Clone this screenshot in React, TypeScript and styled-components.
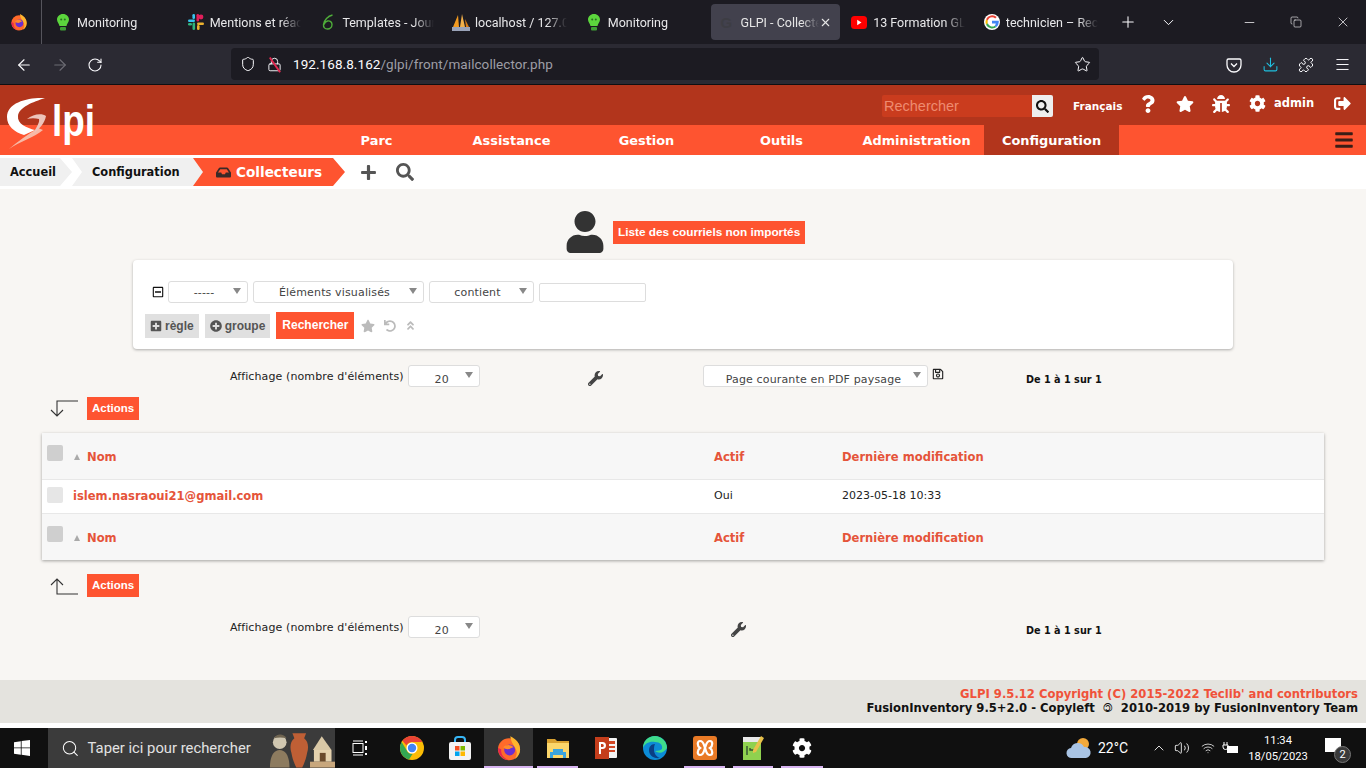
import styled, { createGlobalStyle } from "styled-components";
import {
  ArrowLeft,
  ArrowRight,
  ChevronDown,
  ChevronUp,
  Copy,
  Download,
  Lock,
  Menu,
  Minus,
  Plus,
  Puzzle,
  RotateCw,
  Search,
  Shield,
  Star,
  Volume2,
  Wifi,
  X,
} from "lucide-react";
import {
  FaAngleDoubleUp,
  FaBars,
  FaBug,
  FaCog,
  FaInbox,
  FaPlus,
  FaPlusCircle,
  FaPlusSquare,
  FaQuestion,
  FaRegMinusSquare,
  FaRegSave,
  FaSearch,
  FaSignOutAlt,
  FaStar,
  FaUndo,
  FaUser,
  FaWrench,
} from "react-icons/fa";

const ORANGE = "#fe5430";
const DARK_ORANGE = "#b2351c";

const GlobalStyle = createGlobalStyle`
  html, body {
    margin: 0;
    padding: 0;
    height: 768px;
    overflow: hidden;
    background: #fff;
  }
`;

/* little logos for browser tabs and the taskbar */
const FirefoxIcon = ({ size = 18 }: { size?: number }) => (
  <svg width={size} height={size} viewBox="0 0 20 20">
    <circle cx="10" cy="11" r="8.500" fill="#ff6a2a" />
    <path d="M11 1c4 2 7.500 5 7.500 10 0 4-2 6-4 7.500 2-3 2-6 0-9-1-2-3-4-3.500-8.500z" fill="#ffb52e" />
    <path d="M1.500 10c0 5 4 9.500 9 9.500-4-1-7-4-6.500-8.500l-2.500-1z" fill="#e8254f" />
    <circle cx="10.500" cy="11.500" r="4.200" fill="#6b2fd0" />
    <path d="M5.500 9.500c2-2.500 6-2.500 8 0-2 .3-2.500 1.500-4.500 1.500-1.500 0-2.500-.5-3.500-1.500z" fill="#ff8a2a" />
  </svg>
);

const BulbIcon = () => (
  <svg width="12" height="17" viewBox="0 0 12 17">
    <path d="M6 0c3.500 0 6 2.500 6 5.500 0 2.500-2 4-2.500 6.500h-7C2 9.500 0 8 0 5.500 0 2.500 2.500 0 6 0z" fill="#5cd63d" />
    <rect x="3" y="13" width="6" height="3.500" rx="1" fill="#3f9f35" />
    <circle cx="4.200" cy="5.500" r="1" fill="#2a6e22" />
    <circle cx="7.800" cy="5.500" r="1" fill="#2a6e22" />
  </svg>
);

const SlackIcon = () => (
  <svg width="16" height="16" viewBox="0 0 16 16">
    <rect x="0" y="5.500" width="7" height="2.600" rx="1.300" fill="#36c5f0" />
    <rect x="4.400" y="0" width="2.600" height="5" rx="1.300" fill="#36c5f0" />
    <rect x="8.500" y="0" width="2.600" height="7.500" rx="1.300" fill="#e01e5a" />
    <circle cx="13" cy="3" r="2.400" fill="#e01e5a" />
    <rect x="9" y="8.500" width="7" height="2.600" rx="1.300" fill="#ecb22e" />
    <rect x="9" y="11" width="2.600" height="5" rx="1.300" fill="#ecb22e" />
    <rect x="4.500" y="8.500" width="2.600" height="7.500" rx="1.300" fill="#2eb67d" />
    <rect x="0" y="9" width="4" height="2.600" rx="1.300" fill="#2eb67d" />
  </svg>
);

const LeafIcon = () => (
  <svg width="12" height="16" viewBox="0 0 12 16" fill="none" stroke="#4fae3a" strokeWidth="1.400">
    <path d="M10.500 1C6 2 2 6 1.500 10.500 1.200 13.500 3 15 5.500 15S10 13 10 10.500 8 6.500 5.500 7 2.500 9 2 10.500" />
  </svg>
);

const PmaIcon = () => (
  <svg width="18" height="17" viewBox="0 0 18 17">
    <path d="M1 13 6 1l1 12z" fill="#f29a1f" />
    <path d="M8 13 10 0l3 13z" fill="#f2b04a" />
    <path d="M14 13l-1-8 4 8z" fill="#d97a12" />
    <rect x="0" y="13" width="18" height="4" fill="#9aa3b8" />
  </svg>
);

const YoutubeIcon = () => (
  <svg width="16" height="13" viewBox="0 0 16 13">
    <rect width="16" height="13" rx="3.500" fill="#f00" />
    <path d="M6.200 3.800v5.400L10.500 6.500z" fill="#fff" />
  </svg>
);

const GoogleIcon = ({ size = 16 }: { size?: number }) => (
  <svg width={size} height={size} viewBox="0 0 16 16">
    <circle cx="8" cy="8" r="8" fill="#fff" />
    <path d="M8 3.200a4.800 4.800 0 0 1 3.200 1.200l1.500-1.500A7 7 0 0 0 2 5.300l1.800 1.400A4.600 4.600 0 0 1 8 3.200z" fill="#ea4335" />
    <path d="M2 5.300a7 7 0 0 0 0 5.400l1.800-1.400a4.500 4.500 0 0 1 0-2.600z" fill="#fbbc05" />
    <path d="M2 10.700A7 7 0 0 0 12.500 13l-1.700-1.300a4.600 4.600 0 0 1-7-2.400z" fill="#34a853" />
    <path d="M14.800 8c0-.5 0-.9-.1-1.300H8v2.700h3.800c-.2.900-.5 1.700-1 2.300l1.700 1.300A6.900 6.900 0 0 0 14.800 8z" fill="#4285f4" />
  </svg>
);

const PocketIcon = () => (
  <svg width="16" height="16" viewBox="0 0 16 16" fill="none" stroke="#fbfbfe" strokeWidth="1.300">
    <path d="M2.500 2h11A1.500 1.500 0 0 1 15 3.500V8A7 7 0 0 1 1 8V3.500A1.500 1.500 0 0 1 2.500 2z" />
    <path d="M5 6.500 8 9.500l3-3" />
  </svg>
);

const GlpiLogo = () => (
  <svg width="96" height="54" viewBox="0 0 96 54">
    <path d="M40 1C24 0 2 5 2 20c0 9 7 15 17 18l11-5C22 31 12 27 13 19 14 10 28 5 40 1z" fill="#fff" />
    <path d="M4 52c10-7 26-12 34-19l-5-2C22 38 12 45 4 52z" fill="#f7b9a6" />
    <path d="M22 22c6-5 15-6 19-3-1 7-7 13-12 17 2-6 6-10 5-14-4-1-8-1-12 0z" fill="#edc4ba" />
    <LogoLetters x="47" y="39" textLength="43" lengthAdjust="spacingAndGlyphs">
      lpi
    </LogoLetters>
  </svg>
);

const TaskWindows = () => (
  <svg width="16" height="16" viewBox="0 0 16 16" fill="#fff">
    <path d="M0 2.200 6.800 1.200v6.300H0zM7.600 1.100 16 0v7.500H7.600zM0 8.300h6.800v6.400L0 13.800zM7.600 8.300H16V16l-8.400-1.200z" />
  </svg>
);

const StatueArt = () => (
  <svg width="70" height="40" viewBox="0 0 70 40">
    <circle cx="13" cy="14" r="7" fill="#cfc6b0" />
    <path d="M3 40c0-12 4-18 10-18s10 6 10 18z" fill="#8d7b5f" />
    <path d="M7 10c3-5 10-5 13 0-4-1-9-1-13 0z" fill="#6f6450" />
    <path d="M26 5h14l-2 5c4 3 5 9 3 15-1 6-3 11-5 15h-6c-2-4-4-9-5-15-2-6-1-12 3-15z" fill="#bf5f35" />
    <path d="M47 22 56 8l10 14z" fill="#d9c8a6" />
    <rect x="48" y="22" width="18" height="12" fill="#e5d2ae" />
    <rect x="54" y="25" width="6" height="9" fill="#6a4a2c" />
    <rect x="44" y="34" width="26" height="6" fill="#c8a77d" />
  </svg>
);

const TaskView = () => (
  <svg width="16" height="16" viewBox="0 0 16 16" fill="none" stroke="#fff" strokeWidth="1">
    <rect x="1" y="3.500" width="10" height="9" />
    <path d="M1 1h10M1 15h10" />
    <path d="M14 1v2M14 6v4M14 13v2" strokeWidth="2" />
  </svg>
);

const ChromeIcon = () => (
  <svg width="24" height="24" viewBox="0 0 24 24">
    <circle cx="12" cy="12" r="12" fill="#fbbc05" />
    <path d="M12 0a12 12 0 0 1 10.400 6H12a6 6 0 0 0-5.500 3.500L2.400 4.800A12 12 0 0 1 12 0z" fill="#ea4335" />
    <path d="M1.600 6A12 12 0 0 0 9 23.600l3.500-5.700A6 6 0 0 1 6.500 14z" fill="#34a853" />
    <circle cx="12" cy="12" r="5.500" fill="#fff" />
    <circle cx="12" cy="12" r="4.200" fill="#4285f4" />
  </svg>
);

const StoreIcon = () => (
  <svg width="24" height="24" viewBox="0 0 24 24">
    <path d="M7 6V4a3 3 0 0 1 3-3h4a3 3 0 0 1 3 3v2" fill="none" stroke="#37b6f6" strokeWidth="2" />
    <rect x="1" y="6" width="22" height="18" rx="2" fill="#f3f3f3" />
    <rect x="7" y="10" width="4.500" height="4.500" fill="#f25022" />
    <rect x="12.500" y="10" width="4.500" height="4.500" fill="#7fba00" />
    <rect x="7" y="15.500" width="4.500" height="4.500" fill="#00a4ef" />
    <rect x="12.500" y="15.500" width="4.500" height="4.500" fill="#ffb900" />
  </svg>
);

const ExplorerIcon = () => (
  <svg width="22" height="20" viewBox="0 0 22 20">
    <path d="M0 1h8l2 2h12v4H0z" fill="#d9a130" />
    <rect x="0" y="5" width="22" height="15" fill="#fbd66b" />
    <path d="M6 11h10v3h3v6h-3v-3H6v3H3v-6h3z" fill="#3aa3de" />
  </svg>
);

const PptIcon = () => (
  <svg width="24" height="24" viewBox="0 0 24 24">
    <rect x="8" y="2" width="15" height="20" rx="1" fill="#f3f3f3" />
    <rect x="15" y="5" width="6" height="3" fill="#d24726" />
    <rect x="15" y="10" width="6" height="2" fill="#d24726" />
    <rect x="15" y="14" width="6" height="2" fill="#d24726" />
    <rect x="1" y="1" width="14" height="22" fill="#c43e1c" />
    <path d="M5 6h3.500a3 3 0 0 1 0 7H7v5H5zM7 8v3h1.300a1.500 1.500 0 0 0 0-3z" fill="#fff" />
  </svg>
);

const EdgeIcon = () => (
  <svg width="24" height="24" viewBox="0 0 24 24">
    <circle cx="12" cy="12" r="12" fill="#0c8bd6" />
    <path d="M24 12C24 5 18 0 12 0 5 0 0 5 0 12c2-5 7-7 12-6 5 0 8 3 7 7-1 1-4 2-7 2 4 3 9 2 12-3z" fill="#3fdc8c" />
    <path d="M12 8c-4 0-6 3-6 6 0 5 4 9 11 8-3-1-6-4-6-8 0-2 0-4 1-6z" fill="#0a3f85" />
  </svg>
);

const XamppIcon = () => (
  <svg width="24" height="24" viewBox="0 0 24 24">
    <rect width="24" height="24" rx="3" fill="#e97a26" />
    <path d="M7 5c4 0 4 5 5 7 1-2 1-7 5-7 3 0 3 5 0 7 3 2 3 7 0 7-4 0-4-5-5-7-1 2-1 7-5 7-3 0-3-5 0-7-3-2-3-7 0-7z" fill="none" stroke="#fff" strokeWidth="2.200" />
  </svg>
);

const NotepadIcon = () => (
  <svg width="24" height="24" viewBox="0 0 24 24">
    <rect x="2" y="1" width="18" height="23" fill="#8fd14f" />
    <rect x="2" y="1" width="18" height="5" fill="#e8e8e8" />
    <path d="M6 10v9M9 12v2h4" stroke="#2f4f2f" strokeWidth="1.400" fill="none" />
    <path d="M20 0l3 2-8 14-3 1 0-3z" fill="#e8c14a" />
  </svg>
);

const WeatherIcon = () => (
  <svg width="26" height="24" viewBox="0 0 26 24">
    <circle cx="17" cy="8" r="6" fill="#f2a93b" />
    <path d="M6 22a5 5 0 0 1-1-10 7 7 0 0 1 13-1 5.500 5.500 0 0 1 2 11z" fill="#a9c4e4" />
  </svg>
);

const BatteryIcon = () => (
  <svg width="16" height="14" viewBox="0 0 16 14" fill="none" stroke="#fff">
    <path d="M2 1v3M5 1v3M1 4h5v2a2.500 2.500 0 0 1-5 0z" />
    <rect x="5.500" y="5.500" width="10" height="6" fill="#fff" />
  </svg>
);

function GoogleDim() {
  return <DimText>G</DimText>;
}

const TABS = [
  { icon: <BulbIcon />, title: "Monitoring" },
  { icon: <SlackIcon />, title: "Mentions et réactions" },
  { icon: <LeafIcon />, title: "Templates - Journal" },
  { icon: <PmaIcon />, title: "localhost / 127.0.0.1" },
  { icon: <BulbIcon />, title: "Monitoring" },
  { icon: <GoogleDim />, title: "GLPI - Collecteurs", active: true },
  { icon: <YoutubeIcon />, title: "13 Formation GLPI" },
  { icon: <GoogleIcon />, title: "technicien – Recherche" },
];

const TASK_ICONS = [
  { icon: <ChromeIcon />, width: 48 },
  { icon: <StoreIcon />, width: 48 },
  { icon: <FirefoxIcon size={26} />, width: 49, active: true, open: true },
  { icon: <ExplorerIcon />, width: 49, open: true },
  { icon: <PptIcon />, width: 48 },
  { icon: <EdgeIcon />, width: 50 },
  { icon: <XamppIcon />, width: 49, open: true },
  { icon: <NotepadIcon />, width: 48, open: true },
  { icon: <FaCog color="#fff" size={20} />, width: 50, open: true },
];

const MENU = ["Parc", "Assistance", "Gestion", "Outils", "Administration", "Configuration"];

const PageSize = () => (
  <PagerLabel>
    Affichage (nombre d'éléments)
    <SelectBox $width={72}>
      <SelectText $low>20</SelectText>
    </SelectBox>
  </PagerLabel>
);

const TableHead = () => (
  <HeadRow>
    <CheckCell>
      <CheckBox $dark />
    </CheckCell>
    <HeadCell>
      <SortArrow />
      Nom
    </HeadCell>
    <HeadCell>Actif</HeadCell>
    <HeadCell>Dernière modification</HeadCell>
  </HeadRow>
);

const App = () => {
  return (
    <Screen>
      <GlobalStyle />
      <TabBar>
        <FirefoxSlot>
          <FirefoxIcon />
        </FirefoxSlot>
        {TABS.map((tab, i) => (
          <Tab key={i} $active={tab.active}>
            <TabIcon>{tab.icon}</TabIcon>
            <TabTitle $active={tab.active}>{tab.title}</TabTitle>
            {tab.active && <X size={13} color="#e6e6e6" />}
          </Tab>
        ))}
        <TabTool $width={39}>
          <Plus size={18} strokeWidth={1.4} />
        </TabTool>
        <TabTool $width={39}>
          <ChevronDown size={17} strokeWidth={1.4} />
        </TabTool>
        <WindowButtons>
          <Minus size={15} strokeWidth={1.2} />
          <Copy size={12} strokeWidth={1.2} />
          <X size={16} strokeWidth={1.1} />
        </WindowButtons>
      </TabBar>

      <NavBar>
        <NavButtons>
          <ArrowLeft size={18} strokeWidth={1.5} />
          <ArrowRight size={18} strokeWidth={1.5} color="#6d6c74" />
          <RotateCw size={16} strokeWidth={1.6} />
        </NavButtons>
        <UrlBar>
          <Shield size={16} strokeWidth={1.5} />
          <LockWrap>
            <Lock size={15} strokeWidth={1.5} />
            <LockSlash />
          </LockWrap>
          <Url>
            192.168.8.162<UrlRest>/glpi/front/mailcollector.php</UrlRest>
          </Url>
          <Star size={17} strokeWidth={1.4} />
        </UrlBar>
        <NavTools>
          <PocketIcon />
          <Download size={17} strokeWidth={1.5} color="#1fc0e0" />
          <Puzzle size={16} strokeWidth={1.5} />
          <Menu size={17} strokeWidth={1.4} />
        </NavTools>
      </NavBar>

      <Page>
        <Header>
          <LogoSlot>
            <GlpiLogo />
          </LogoSlot>
          <TopBar>
            <GlobalSearch>
              <GlobalInput>Rechercher</GlobalInput>
              <GlobalButton>
                <FaSearch size={13} color="#111" />
              </GlobalButton>
            </GlobalSearch>
            <Lang>Français</Lang>
            <TopIcon $width={20}>
              <FaQuestion size={18} />
            </TopIcon>
            <TopIcon $width={19}>
              <FaStar size={18} />
            </TopIcon>
            <TopIcon $width={20}>
              <FaBug size={18} />
            </TopIcon>
            <TopIcon $width={19}>
              <FaCog size={17} />
            </TopIcon>
            <UserName>admin</UserName>
            <TopIcon $width={18}>
              <FaSignOutAlt size={17} />
            </TopIcon>
          </TopBar>
          <MainMenu>
            {MENU.map((item) => (
              <MenuItem key={item} $active={item === "Configuration"}>
                {item}
              </MenuItem>
            ))}
            <MenuBurger>
              <FaBars size={20} color="#3a1d16" />
            </MenuBurger>
          </MainMenu>
        </Header>

        <CrumbBar>
          <Crumb $first>Accueil</Crumb>
          <Crumb>Configuration</Crumb>
          <CurrentCrumb>
            <FaInbox size={15} color="#3a2a28" />
            Collecteurs
          </CurrentCrumb>
          <CrumbTools>
            <FaPlus size={17} />
            <FaSearch size={18} />
          </CrumbTools>
        </CrumbBar>

        <Content>
          <TitleRow>
            <FaUser size={42} color="#333" />
            <OrangeButton $width={192}>Liste des courriels non importés</OrangeButton>
          </TitleRow>

          <SearchCard>
            <SearchLine>
              <MinusSlot>
                <FaRegMinusSquare size={12} color="#111" />
              </MinusSlot>
              <SelectBox $width={80}>
                <SelectText>-----</SelectText>
              </SelectBox>
              <SelectBox $width={171}>
                <SelectText>Éléments visualisés</SelectText>
              </SelectBox>
              <SelectBox $width={105}>
                <SelectText>contient</SelectText>
              </SelectBox>
              <TextField />
            </SearchLine>
            <SearchActions>
              <GrayButton>
                <FaPlusSquare size={12} color="#555" />
                règle
              </GrayButton>
              <GrayButton>
                <FaPlusCircle size={12} color="#555" />
                groupe
              </GrayButton>
              <SubmitButton>Rechercher</SubmitButton>
              <MutedIcons>
                <FaStar size={14} />
                <FaUndo size={12} />
                <FaAngleDoubleUp size={11} />
              </MutedIcons>
            </SearchActions>
          </SearchCard>

          <Pager $columns="358px 115px 323px 1fr" $top={16}>
            <PageSize />
            <WrenchSlot>
              <FaWrench size={15} />
            </WrenchSlot>
            <ExportCell>
              <SelectBox $width={225}>
                <SelectText $low>Page courante en PDF paysage</SelectText>
              </SelectBox>
              <SaveSlot>
                <FaRegSave size={12} color="#222" />
              </SaveSlot>
            </ExportCell>
            <Count>De 1 à 1 sur 1</Count>
          </Pager>

          <ActionsRow $top={10}>
            <CornerArrow viewBox="0 0 28 18" width="28" height="18">
              <path d="M28 1H7v15M1 10l6 6 6-6" fill="none" stroke="#333" strokeWidth="1.100" />
            </CornerArrow>
            <OrangeButton>Actions</OrangeButton>
          </ActionsRow>

          <ListTable>
            <colgroup>
              <col width="31" />
              <col width="641" />
              <col width="128" />
              <col />
            </colgroup>
            <tbody>
              <TableHead />
              <DataRow>
                <CheckCell $data>
                  <CheckBox />
                </CheckCell>
                <NameCell>islem.nasraoui21@gmail.com</NameCell>
                <DataCell>Oui</DataCell>
                <DataCell>2023-05-18 10:33</DataCell>
              </DataRow>
              <TableHead />
            </tbody>
          </ListTable>

          <ActionsRow $top={14}>
            <CornerArrow viewBox="0 0 28 18" width="28" height="18">
              <path d="M28 17H7V2M1 8l6-6 6 6" fill="none" stroke="#333" strokeWidth="1.100" />
            </CornerArrow>
            <OrangeButton>Actions</OrangeButton>
          </ActionsRow>

          <Pager $columns="501px 295px 1fr" $top={19}>
            <PageSize />
            <WrenchSlot>
              <FaWrench size={15} />
            </WrenchSlot>
            <Count>De 1 à 1 sur 1</Count>
          </Pager>
        </Content>

        <Footer>
          <FooterLine $red>GLPI 9.5.12 Copyright (C) 2015-2022 Teclib' and contributors</FooterLine>
          <FooterLine>
            FusionInventory 9.5+2.0 - Copyleft <CopyleftMark>🄯</CopyleftMark> 2010-2019 by FusionInventory Team
          </FooterLine>
        </Footer>
      </Page>

      <Taskbar>
        <StartButton>
          <TaskWindows />
        </StartButton>
        <TaskSearch>
          <Search size={19} strokeWidth={1.3} color="#fff" />
          <TaskSearchText>Taper ici pour rechercher</TaskSearchText>
          <StatueArt />
        </TaskSearch>
        <TaskViewSlot>
          <TaskView />
        </TaskViewSlot>
        {TASK_ICONS.map((item, i) => (
          <TaskItem key={i} $width={item.width} $active={item.active} $open={item.open}>
            {item.icon}
          </TaskItem>
        ))}
        <Tray>
          <WeatherIcon />
          <Temp>22°C</Temp>
          <TrayIcons>
            <ChevronUp size={16} strokeWidth={1.3} />
            <Volume2 size={16} strokeWidth={1.3} />
            <WifiIcon size={14} strokeWidth={1.3} />
            <BatteryIcon />
          </TrayIcons>
          <Clock>
            <span>11:34</span>
            <span>18/05/2023</span>
          </Clock>
          <Notif>
            <NotifSheet />
            <NotifBadge>2</NotifBadge>
          </Notif>
        </Tray>
      </Taskbar>
    </Screen>
  );
};

export default App;

const Screen = styled.div`
  width: 1366px;
  height: 768px;
  display: flex;
  flex-direction: column;
  overflow: hidden;
  font-family: "DejaVu Sans", sans-serif;
`;

const TabBar = styled.div`
  height: 44px;
  flex: none;
  display: flex;
  align-items: center;
  background: #1c1b22;
  color: #fbfbfe;
`;

const FirefoxSlot = styled.div`
  width: 42px;
  height: 44px;
  box-sizing: border-box;
  display: flex;
  align-items: center;
  justify-content: center;
  border-right: 1px solid #55545c;
  margin-right: 4px;
  padding-right: 3px;
`;

const DimText = styled.span`
  color: #3d3d44;
  font: bold 15px "Liberation Sans", sans-serif;
`;

const Tab = styled.div<{ $active?: boolean }>`
  width: 128.700px;
  height: 36px;
  flex: none;
  margin: 0 2px;
  box-sizing: border-box;
  padding: 0 8px 0 5px;
  display: flex;
  align-items: center;
  border-radius: 4px;
  background: ${({ $active }) => ($active ? "#42414d" : "transparent")};
`;

const TabIcon = styled.div`
  width: 20px;
  flex: none;
  display: flex;
  justify-content: center;
  margin-right: 4px;
`;

const TabTitle = styled.div<{ $active?: boolean }>`
  flex: 1;
  min-width: 0;
  overflow: hidden;
  white-space: nowrap;
  font: 12.500px Roboto, sans-serif;
  color: ${({ $active }) => ($active ? "#e6e6e6" : "#e8e8ea")};
  -webkit-mask-image: linear-gradient(to right, #000 78%, transparent 100%);
  mask-image: linear-gradient(to right, #000 78%, transparent 100%);
`;

const TabTool = styled.div<{ $width: number }>`
  width: ${({ $width }) => $width}px;
  flex: none;
  display: flex;
  justify-content: center;
  padding-left: 1px;
`;

const WindowButtons = styled.div`
  margin-left: auto;
  width: 144px;
  display: flex;
  align-items: center;
  justify-content: space-between;
  padding: 0 15px 0 20px;
  box-sizing: border-box;
`;

const NavBar = styled.div`
  height: 41px;
  flex: none;
  display: flex;
  align-items: center;
  background: #2b2a33;
  color: #fbfbfe;
  border-bottom: 1px solid #0f0f12;
  box-sizing: border-box;
`;

const NavButtons = styled.div`
  width: 231px;
  flex: none;
  display: flex;
  align-items: center;
  gap: 18px;
  padding: 1px 0 0 15px;
  box-sizing: border-box;
`;

const UrlBar = styled.div`
  width: 868px;
  height: 32px;
  flex: none;
  display: flex;
  align-items: center;
  padding: 0 8px 0 9px;
  box-sizing: border-box;
  background: #1c1b22;
  border-radius: 4px;
`;

const LockWrap = styled.span`
  position: relative;
  display: flex;
  margin-left: 11px;
`;

const LockSlash = styled.span`
  position: absolute;
  left: 7px;
  top: -1px;
  width: 1.500px;
  height: 18px;
  background: #e22850;
  transform: rotate(-35deg);
`;

const Url = styled.div`
  flex: 1;
  margin-left: 11px;
  font: 13.500px Roboto, sans-serif;
  color: #fbfbfe;
  letter-spacing: 0.070px;
`;

const UrlRest = styled.span`
  color: #9e9ea6;
`;

const NavTools = styled.div`
  flex: 1;
  display: flex;
  align-items: center;
  justify-content: space-between;
  padding: 1px 15px 0 127px;
`;

const Page = styled.div`
  flex: 1;
  min-height: 0;
  display: flex;
  flex-direction: column;
  background: #fff;
`;

const Header = styled.header`
  position: relative;
  flex: none;
`;

const LogoSlot = styled.div`
  position: absolute;
  left: 5px;
  top: 12px;
  z-index: 2;
`;

const LogoLetters = styled.text`
  font: bold 44px "Liberation Sans", sans-serif;
  fill: #fff;
`;

const TopBar = styled.div`
  height: 40px;
  display: flex;
  align-items: center;
  padding-left: 882px;
  background: ${DARK_ORANGE};
  color: #fff;
`;

const GlobalSearch = styled.div`
  display: flex;
  width: 171px;
  height: 22px;
  margin-top: 2px;
  border-radius: 2px;
  overflow: hidden;
`;

const GlobalInput = styled.div`
  flex: 1;
  background: #ca3c1e;
  color: #ee8b70;
  font: 14.500px/22px "Liberation Sans", sans-serif;
  padding-left: 2px;
`;

const GlobalButton = styled.div`
  width: 21px;
  display: flex;
  align-items: center;
  justify-content: center;
  background: #eee;
`;

const Lang = styled.div`
  margin: 2px 0 0 20px;
  width: 48px;
  font-size: 10.500px;
  font-weight: bold;
  white-space: nowrap;
`;

const TopIcon = styled.div<{ $width: number }>`
  width: ${({ $width }) => $width}px;
  display: flex;
  justify-content: center;
  margin-left: 17px;
  margin-top: -3px;
`;

const UserName = styled.div`
  margin: -4px 2px 0 7px;
  width: 40px;
  font-size: 11.500px;
  font-weight: bold;
`;

const MainMenu = styled.nav`
  height: 30px;
  display: flex;
  padding-left: 309px;
  background: ${ORANGE};
`;

const MenuItem = styled.div<{ $active?: boolean }>`
  width: 135px;
  text-align: center;
  font-size: 12.900px;
  font-weight: bold;
  line-height: 31px;
  color: #fff;
  white-space: nowrap;
  background: ${({ $active }) => ($active ? DARK_ORANGE : "transparent")};
`;

const MenuBurger = styled.div`
  margin-left: auto;
  padding: 5px 12px 0 0;
`;

const CrumbBar = styled.div`
  height: 34px;
  flex: none;
  display: flex;
  align-items: center;
  background: #fff;
`;

const Crumb = styled.div<{ $first?: boolean }>`
  height: 28px;
  display: flex;
  align-items: center;
  box-sizing: border-box;
  background: #f0f0f0;
  color: #111;
  font-size: 11.400px;
  font-weight: bold;
  width: ${({ $first }) => ($first ? "72px" : "134px")};
  padding-left: ${({ $first }) => ($first ? "10px" : "20px")};
  margin-right: ${({ $first }) => ($first ? "0" : "-13px")};
  clip-path: polygon(
    0 0,
    calc(100% - 12px) 0,
    100% 50%,
    calc(100% - 12px) 100%,
    0 100%,
    ${({ $first }) => ($first ? "0" : "10px")} 50%
  );
`;

const CurrentCrumb = styled.div`
  height: 28px;
  width: 152px;
  box-sizing: border-box;
  padding-left: 23px;
  display: flex;
  align-items: center;
  gap: 5px;
  background: ${ORANGE};
  color: #fff;
  font-size: 13.600px;
  font-weight: bold;
  white-space: nowrap;
  clip-path: polygon(0 100%, 10px 50%, 0 0, calc(100% - 12px) 0, 100% 50%, calc(100% - 12px) 100%);
`;

const CrumbTools = styled.div`
  display: flex;
  align-items: center;
  gap: 19px;
  margin-left: 15px;
  color: #555;
`;

const Content = styled.main`
  flex: 1;
  min-height: 0;
  background: #f8f6f3;
`;

const TitleRow = styled.div`
  height: 71px;
  box-sizing: border-box;
  padding: 15px 0 0 564px;
  display: flex;
  align-items: center;
  gap: 7px;
`;

const OrangeButton = styled.div<{ $width?: number }>`
  height: 23px;
  width: ${({ $width }) => ($width ? `${$width}px` : "auto")};
  box-sizing: ${({ $width }) => ($width ? "border-box" : "content-box")};
  padding: 0 5px;
  background: ${ORANGE};
  color: #fff;
  font: bold ${({ $width }) => ($width ? "11.800px" : "11.500px")}/22px "Liberation Sans", sans-serif;
  white-space: nowrap;
`;

const SearchCard = styled.section`
  width: 1100px;
  height: 89px;
  margin-left: 133px;
  box-sizing: border-box;
  padding: 21px 0 0 13px;
  background: #fff;
  border-radius: 4px;
  box-shadow: 0 1px 3px rgba(0, 0, 0, 0.3);
`;

const SearchLine = styled.div`
  display: flex;
  align-items: center;
  gap: 5px;
`;

const MinusSlot = styled.div`
  width: 16px;
  margin-left: 6px;
  margin-right: -5px;
  display: flex;
`;

const SelectBox = styled.div<{ $width: number }>`
  position: relative;
  width: ${({ $width }) => $width}px;
  height: 22px;
  flex: none;
  box-sizing: border-box;
  display: flex;
  align-items: center;
  padding-right: 8px;
  background: #fff;
  border: 1px solid #ddd;
  border-radius: 3px;

  &::after {
    content: "";
    position: absolute;
    right: 6px;
    top: 6px;
    border-style: solid;
    border-width: 6px 4px 0;
    border-color: #888 transparent transparent;
  }
`;

/* the pager selects sit their text a little lower than the search selects */
const SelectText = styled.span<{ $low?: boolean }>`
  flex: 1;
  text-align: center;
  color: #444;
  font-size: 11px;
  font-weight: normal;
  letter-spacing: 0.150px;
  white-space: nowrap;
  padding: ${({ $low }) => ($low ? "6px 0 0 4px" : "1px 0 0")};
`;

const TextField = styled.div`
  width: 107px;
  height: 19px;
  box-sizing: border-box;
  background: #fff;
  border: 1px solid #ddd;
  border-radius: 2px;
`;

const SearchActions = styled.div`
  display: flex;
  align-items: center;
  gap: 6px;
  margin: 9px 0 0 -1px;
`;

const GrayButton = styled.div`
  height: 24px;
  padding: 0 5px;
  display: flex;
  align-items: center;
  gap: 3px;
  background: #e0e0e0;
  color: #555;
  font: bold 12px "Liberation Sans", sans-serif;
`;

const SubmitButton = styled.div`
  height: 27px;
  padding: 0 6px;
  background: ${ORANGE};
  color: #fff;
  font: bold 12px/27px "Liberation Sans", sans-serif;
`;

const MutedIcons = styled.div`
  display: flex;
  align-items: center;
  gap: 9px;
  margin-left: 1px;
  color: #bbb;
`;

const Pager = styled.div<{ $columns: string; $top: number }>`
  display: grid;
  grid-template-columns: ${({ $columns }) => $columns};
  align-items: center;
  height: 22px;
  margin-top: ${({ $top }) => $top}px;
  padding-left: 230px;
  color: #222;
  font-size: 11px;
`;

const PagerLabel = styled.div`
  display: flex;
  align-items: center;
  gap: 4px;
  white-space: nowrap;
  letter-spacing: 0.110px;
`;

const WrenchSlot = styled.div`
  display: flex;
  padding-top: 5px;
  color: #444;
`;

const ExportCell = styled.div`
  display: flex;
  align-items: flex-start;
  gap: 4px;
`;

const SaveSlot = styled.div`
  display: flex;
  padding-top: 3px;
`;

const Count = styled.div`
  padding-top: 6px;
  font-size: 9.700px;
  font-weight: bold;
  color: #111;
  white-space: nowrap;
`;

const ActionsRow = styled.div<{ $top: number }>`
  display: flex;
  align-items: center;
  gap: 9px;
  margin-top: ${({ $top }) => $top}px;
  padding-left: 50px;
`;

const CornerArrow = styled.svg`
  flex: none;
`;

const ListTable = styled.table`
  width: 1282px;
  height: 127px;
  margin: 13px 0 0 42px;
  table-layout: fixed;
  border-collapse: collapse;
  background: #fff;
  box-shadow: 0 1px 3px rgba(0, 0, 0, 0.35);
`;

const HeadRow = styled.tr`
  height: 46px;
  background: #f7f7f7;
`;

const DataRow = styled.tr`
  height: 33px;
  background: #fff;
  border-top: 1px solid #e8e8e8;
  border-bottom: 1px solid #e8e8e8;
`;

const CheckCell = styled.td<{ $data?: boolean }>`
  padding: ${({ $data }) => ($data ? "0 0 2px 5px" : "0 0 6px 5px")};
`;

const CheckBox = styled.div<{ $dark?: boolean }>`
  width: 16px;
  height: 16px;
  border-radius: 2px;
  background: ${({ $dark }) => ($dark ? "#cfcfcf" : "#e6e6e6")};
`;

const HeadCell = styled.td`
  padding: 2px 0 0;
  color: #e5543a;
  font-size: 11.550px;
  font-weight: bold;
  white-space: nowrap;
`;

const SortArrow = styled.span`
  display: inline-block;
  margin: 0 7px 1px 1px;
  border-style: solid;
  border-width: 0 3.500px 6px;
  border-color: transparent transparent #aaa;
`;

const NameCell = styled.td`
  padding: 0 0 1px;
  color: #e5543a;
  font-size: 11.550px;
  font-weight: bold;
  white-space: nowrap;
`;

const DataCell = styled.td`
  padding: 0 0 1px;
  color: #222;
  font-size: 11px;
  white-space: nowrap;
`;

const Footer = styled.footer`
  height: 43px;
  flex: none;
  box-sizing: border-box;
  padding: 7px 8px 0 0;
  margin-bottom: 5px;
  background: #e4e3de;
  text-align: right;
`;

const FooterLine = styled.div<{ $red?: boolean }>`
  font-size: 11.600px;
  line-height: 14px;
  font-weight: bold;
  color: ${({ $red }) => ($red ? "#f0523a" : "#111")};
  white-space: nowrap;
`;

const CopyleftMark = styled.span`
  padding: 0 4px;
  font-weight: normal;
`;

const Taskbar = styled.div`
  height: 40px;
  flex: none;
  display: flex;
  align-items: center;
  background: #101010;
  color: #fff;
`;

const StartButton = styled.div`
  width: 48px;
  height: 40px;
  flex: none;
  display: flex;
  align-items: center;
  justify-content: center;
  padding-right: 4px;
  box-sizing: border-box;
`;

const TaskSearch = styled.div`
  width: 287px;
  height: 40px;
  flex: none;
  display: flex;
  align-items: center;
  padding-left: 13px;
  box-sizing: border-box;
  background: #3b3b3b;
  overflow: hidden;
`;

const TaskSearchText = styled.span`
  margin-left: 8px;
  width: 179px;
  flex: none;
  font: 14.800px Roboto, sans-serif;
  color: #e2e2e2;
  white-space: nowrap;
`;

const TaskViewSlot = styled.div`
  width: 50px;
  margin-right: 3px;
  flex: none;
  display: flex;
  justify-content: center;
`;

const TaskItem = styled.div<{ $width: number; $active?: boolean; $open?: boolean }>`
  position: relative;
  width: ${({ $width }) => $width}px;
  height: 40px;
  flex: none;
  display: flex;
  align-items: center;
  justify-content: center;
  background: ${({ $active }) => ($active ? "#333" : "transparent")};

  &::after {
    content: "";
    position: absolute;
    left: ${({ $active }) => ($active ? "0" : "4px")};
    right: ${({ $active }) => ($active ? "0" : "4px")};
    bottom: 0;
    height: 2px;
    background: ${({ $open }) => ($open ? "#d7b4f0" : "transparent")};
  }
`;

const Tray = styled.div`
  margin-left: auto;
  padding-right: 9px;
  display: flex;
  align-items: center;
`;

const Temp = styled.span`
  margin-left: 6px;
  font: 14px Roboto, sans-serif;
`;

const TrayIcons = styled.div`
  display: flex;
  align-items: center;
  gap: 7px;
  margin-left: 23px;
`;

const WifiIcon = styled(Wifi)`
  margin-left: 4px;
`;

const Clock = styled.div`
  width: 74px;
  margin-left: 3px;
  display: flex;
  flex-direction: column;
  align-items: center;
  gap: 3px;
  font: 11.200px Roboto, sans-serif;
`;

const Notif = styled.div`
  position: relative;
  width: 43px;
  height: 40px;
  margin-left: -1px;
  display: flex;
  align-items: center;
  justify-content: center;
`;

const NotifSheet = styled.div`
  width: 16px;
  height: 14px;
  background: #fff;
  margin: -6px 5px 0 0;
`;

const NotifBadge = styled.span`
  position: absolute;
  left: 20px;
  top: 18px;
  width: 17px;
  height: 17px;
  border-radius: 50%;
  background: #3a3a3a;
  border: 1px solid #777;
  box-sizing: border-box;
  text-align: center;
  font: 11px/15px Roboto, sans-serif;
`;
